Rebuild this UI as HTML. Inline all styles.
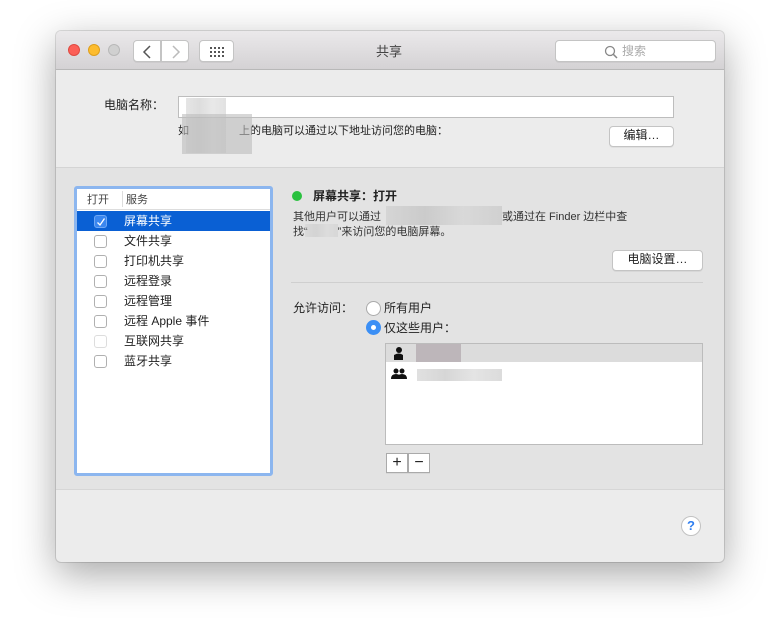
<!DOCTYPE html>
<html><head><meta charset="utf-8"><style>
*{margin:0;padding:0;box-sizing:border-box}
body{width:780px;height:643px;background:#fff;position:relative;overflow:hidden;font-family:"Liberation Sans","Noto Sans CJK SC",sans-serif;font-size:12px;color:#222}
.a{position:absolute}
.win{left:56px;top:31px;width:668px;height:531px;border-radius:5px;background:#ececec;box-shadow:0 12px 40px rgba(0,0,0,.35),0 0 0 1px rgba(0,0,0,.12);overflow:hidden}
.tb{left:0;top:0;width:668px;height:39px;background:linear-gradient(#ebe9eb,#d4d2d4);border-bottom:1px solid #b8b8b8}
.btn{background:#fff;border:1px solid #c4c4c4;border-radius:4px;box-shadow:0 1px 0 rgba(0,0,0,.05)}
.cb{width:13px;height:13px;border:1px solid #b0b0b0;border-radius:3px;background:#fff}
.row{left:1px;width:195px;height:20px}
.row span{position:absolute;left:48px;top:1px;font-size:12px}
.blur{background:linear-gradient(90deg,#ccc,#bbb,#d2d2d2,#c4c4c4);opacity:.8}
</style></head><body>
<div class="a win">
 <div class="a tb">
  <div class="a" style="left:12px;top:13px;width:12px;height:12px;border-radius:50%;background:#fc5f57;border:1px solid #de4a42"></div>
  <div class="a" style="left:32px;top:13px;width:12px;height:12px;border-radius:50%;background:#fdbc2e;border:1px solid #de9f1c"></div>
  <div class="a" style="left:52px;top:13px;width:12px;height:12px;border-radius:50%;background:#d0d0d0;border:1px solid #b8b8b8"></div>
  <div class="a btn" style="left:77px;top:9px;width:28px;height:22px;border-radius:4px 0 0 4px"><svg width="28" height="22"><path d="M16 5 L10 11 L16 17" stroke="#555" stroke-width="1.5" fill="none"/></svg></div>
  <div class="a btn" style="left:105px;top:9px;width:28px;height:22px;border-radius:0 4px 4px 0"><svg width="28" height="22"><path d="M11 5 L17 11 L11 17" stroke="#bbb" stroke-width="1.5" fill="none"/></svg></div>
  <div class="a btn" style="left:143px;top:9px;width:35px;height:22px"><svg width="35" height="22"><g fill="#555"><rect x="10" y="6" width="2" height="2"/><rect x="14" y="6" width="2" height="2"/><rect x="18" y="6" width="2" height="2"/><rect x="22" y="6" width="2" height="2"/><rect x="10" y="10" width="2" height="2"/><rect x="14" y="10" width="2" height="2"/><rect x="18" y="10" width="2" height="2"/><rect x="22" y="10" width="2" height="2"/><rect x="10" y="14" width="2" height="2"/><rect x="14" y="14" width="2" height="2"/><rect x="18" y="14" width="2" height="2"/><rect x="22" y="14" width="2" height="2"/></g></svg></div>
  <div class="a" style="left:320px;top:10px;font-size:13px;color:#444">共享</div>
  <div class="a btn" style="left:499px;top:9px;width:161px;height:22px;border-radius:4px"><svg class="a" style="left:48px;top:4px" width="14" height="14"><circle cx="6" cy="6" r="4.5" stroke="#888" stroke-width="1.3" fill="none"/><path d="M9.3 9.3 L13 13" stroke="#888" stroke-width="1.5"/></svg><span class="a" style="left:66px;top:1px;color:#aaa;font-size:12px">搜索</span></div>
 </div>
 <div class="a" style="left:48px;top:65px;font-size:12px">电脑名称：</div>
 <div class="a" style="left:122px;top:65px;width:496px;height:22px;background:#fff;border:1px solid #bdbdbd"></div>
 <div class="a blur" style="left:130px;top:67px;width:40px;height:55px;opacity:.5"></div>
 <div class="a" style="left:122px;top:91px;font-size:11px">如</div>
 <div class="a" style="left:183px;top:91px;font-size:11px">上的电脑可以通过以下地址访问您的电脑：</div>
 <div class="a blur" style="left:126px;top:83px;width:70px;height:40px;background:#bdbdbd;opacity:.6"></div>
 <div class="a btn" style="left:553px;top:95px;width:65px;height:21px;font-size:12px;text-align:center;line-height:17px">编辑…</div>
 <div class="a" style="left:0;top:136px;width:668px;height:323px;background:#e3e3e3;border-top:1px solid #d4d4d4;border-bottom:1px solid #d6d6d6"></div>
 <div class="a" style="left:18px;top:155px;width:199px;height:290px;background:#fff;border:3px solid #8cb6ef;border-radius:3px">
  <div class="a" style="left:0;top:0;width:193px;height:21px;border-bottom:1px solid #ddd;font-size:11px;color:#444"><span class="a" style="left:10px;top:2px">打开</span><span class="a" style="left:45px;top:2px;width:1px;height:16px;background:#ddd"></span><span class="a" style="left:49px;top:2px">服务</span></div>
  <div class="a row" style="left:0;top:22px;width:193px;background:#0a60d4;color:#fff"><div class="a cb" style="left:17px;top:4px;background:#3a86ef;border-color:#6ea7f5"></div><svg class="a" style="left:18px;top:5px" width="12" height="12"><path d="M2.5 6.5 L5 9 L9.5 2.5" stroke="#fff" stroke-width="1.3" fill="none"/></svg><span style="color:#fff;left:47px">屏幕共享</span></div>
  <div class="a row" style="left:0;top:42px"><div class="a cb" style="left:17px;top:4px"></div><span style="left:47px">文件共享</span></div>
  <div class="a row" style="left:0;top:62px"><div class="a cb" style="left:17px;top:4px"></div><span style="left:47px">打印机共享</span></div>
  <div class="a row" style="left:0;top:82px"><div class="a cb" style="left:17px;top:4px"></div><span style="left:47px">远程登录</span></div>
  <div class="a row" style="left:0;top:102px"><div class="a cb" style="left:17px;top:4px"></div><span style="left:47px">远程管理</span></div>
  <div class="a row" style="left:0;top:122px"><div class="a cb" style="left:17px;top:4px"></div><span style="left:47px">远程 Apple 事件</span></div>
  <div class="a row" style="left:0;top:142px"><div class="a cb" style="left:17px;top:4px;border-color:#ddd"></div><span style="left:47px">互联网共享</span></div>
  <div class="a row" style="left:0;top:162px"><div class="a cb" style="left:17px;top:4px"></div><span style="left:47px">蓝牙共享</span></div>
 </div>
 <div class="a" style="left:236px;top:160px;width:10px;height:10px;border-radius:50%;background:#2ac13f"></div>
 <div class="a" style="left:257px;top:156px;font-size:12px;font-weight:bold">屏幕共享：打开</div>
 <div class="a" style="left:237px;top:177px;font-size:11px;color:#333">其他用户可以通过</div>
 <div class="a blur" style="left:330px;top:175px;width:116px;height:19px;opacity:.6"></div>
 <div class="a" style="left:446px;top:177px;font-size:11px;color:#333">或通过在 Finder 边栏中查</div>
 <div class="a" style="left:237px;top:192px;font-size:11px;color:#333">找“<span style="display:inline-block;width:30px"></span>”来访问您的电脑屏幕。</div>
 <div class="a blur" style="left:249px;top:193px;width:33px;height:13px;opacity:.4"></div>
 <div class="a btn" style="left:556px;top:219px;width:91px;height:21px;text-align:center;line-height:17px">电脑设置…</div>
 <div class="a" style="left:235px;top:251px;width:412px;height:1px;background:#cfcfcf"></div>
 <div class="a" style="left:237px;top:268px;font-size:12px">允许访问：</div>
 <div class="a" style="left:310px;top:270px;width:15px;height:15px;border-radius:50%;background:#fff;border:1px solid #aaa"></div>
 <div class="a" style="left:328px;top:268px;font-size:12px">所有用户</div>
 <div class="a" style="left:310px;top:289px;width:15px;height:15px;border-radius:50%;background:#3b8ff5"><div class="a" style="left:5px;top:5px;width:5px;height:5px;border-radius:50%;background:#fff"></div></div>
 <div class="a" style="left:328px;top:288px;font-size:12px">仅这些用户：</div>
 <div class="a" style="left:329px;top:312px;width:318px;height:102px;background:#fff;border:1px solid #bcbcbc">
  <div class="a" style="left:0;top:0;width:316px;height:18px;background:#dcdcdc"></div>
  <svg class="a" style="left:5px;top:2px" width="14" height="14"><circle cx="8" cy="4" r="3" fill="#111"/><path d="M3 14 L3 9 Q8 6 12 9 L12 14Z" fill="#111"/></svg>
  <div class="a blur" style="left:30px;top:0;width:45px;height:18px;background:#b5adb2"></div>
  <svg class="a" style="left:5px;top:24px" width="16" height="12"><circle cx="5" cy="3" r="2.5" fill="#111"/><circle cx="11" cy="3" r="2.5" fill="#111"/><path d="M0 11 Q0 6 5 6 Q10 6 10 11Z M6 11 Q6 6 11 6 Q16 6 16 11Z" fill="#111"/></svg>
  <div class="a blur" style="left:31px;top:25px;width:85px;height:12px;opacity:.6"></div>
 </div>
 <div class="a btn" style="left:330px;top:422px;width:22px;height:20px;border-radius:0;border-color:#aaa;text-align:center;font-size:16px;line-height:18px">+</div>
 <div class="a btn" style="left:352px;top:422px;width:22px;height:20px;border-radius:0;border-color:#aaa;text-align:center;font-size:16px;line-height:17px">−</div>
 <div class="a" style="left:625px;top:485px;width:20px;height:20px;border-radius:50%;background:#fff;border:1px solid #c2c2c2;color:#2f7ef0;text-align:center;font-size:13px;line-height:18px;font-weight:bold">?</div>
</div>
</body></html>
